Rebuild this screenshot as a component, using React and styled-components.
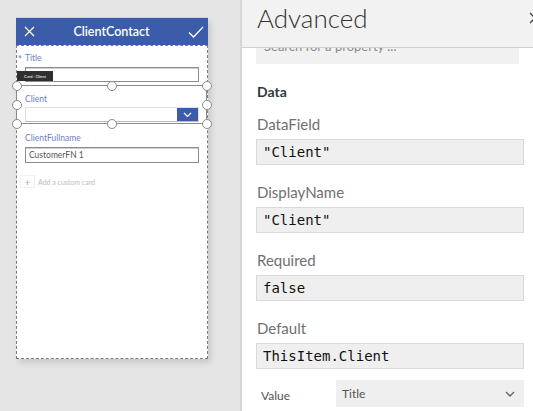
import styled, { createGlobalStyle } from "styled-components";

const GlobalStyle = createGlobalStyle`
  html, body {
    margin: 0;
    padding: 0;
    background: #e5e5e5;
    font-family: Lato, "Open Sans", sans-serif;
  }
`;

const Page = styled.div`
  display: flex;
  width: 533px;
  height: 411px;
  overflow: hidden;
  background: #e5e5e5;
`;

const Canvas = styled.div`
  width: 240px;
  flex-shrink: 0;
  padding: 17px 0 0 16px;
  box-sizing: border-box;
`;

const Phone = styled.div`
  width: 192px;
  height: 341px;
  background: #fff;
  border-top: 1px solid #c9d1e6;
  box-shadow: 3px 4px 6px rgba(0, 0, 0, 0.12);
  display: flex;
  flex-direction: column;
`;

const AppBar = styled.div`
  height: 27px;
  background: #3b5ca8;
  display: flex;
  align-items: center;
  justify-content: space-between;
  padding: 0 4px 0 8px;
  color: #fff;
  font-size: 12.5px;
  font-weight: 600;
`;

const Form = styled.div`
  flex: 1;
  border: 1px dashed #7a7a7a;
  display: flex;
  flex-direction: column;
`;

const Card = styled.div`
  position: relative;
  padding: ${(p) => p.pad || "7px 8px 4px 8px"};
  display: flex;
  flex-direction: column;
`;

const FieldLabel = styled.div`
  position: relative;
  font-size: 8.5px;
  line-height: 10px;
  color: #6f80c6;
  margin-bottom: ${(p) => p.gap || "4px"};
`;

const Star = styled.span`
  position: absolute;
  left: -7px;
  top: 1px;
  font-size: 9px;
  font-weight: 700;
`;

const Input = styled.div`
  height: ${(p) => p.h || "15px"};
  box-sizing: border-box;
  border: 1px solid #8c8c8c;
  box-shadow: inset 0 1px 0 #d0d0d0;
  font-size: 8.5px;
  color: #555;
  padding-left: 3px;
  display: flex;
  align-items: center;
  justify-content: space-between;
`;

const SelectBox = styled(Input)`
  border-color: #e0e0e0;
  border-bottom-color: #b8b8b8;
  box-shadow: none;
  padding: 0;
`;

const ChevronBox = styled.div`
  width: 21px;
  height: 13px;
  background: #3b5ca8;
  display: flex;
  align-items: center;
  justify-content: center;
`;

const Frame = styled.div`
  position: absolute;
  left: -1px;
  right: 0;
  top: -1px;
  bottom: 0;
  border: 1.5px solid #8a8a8a;
  border-left-width: 1px;
  pointer-events: none;
`;

const Handle = styled.div`
  position: absolute;
  width: 10px;
  height: 10px;
  border-radius: 50%;
  background: #fff;
  border: 1px solid #8a8a8a;
  box-sizing: border-box;
  transform: translate(-50%, -50%);
`;

const Tip = styled.div`
  position: absolute;
  left: 0;
  top: 25px;
  width: 36px;
  height: 10px;
  background: #2f2f2f;
  color: #ddd;
  font-size: 4px;
  font-weight: 700;
  display: flex;
  align-items: center;
  justify-content: center;
  z-index: 2;
`;

const AddRow = styled.div`
  display: flex;
  align-items: center;
  gap: 3px;
  margin: 12px 0 0 3px;
  font-size: 7px;
  color: #bdbdbd;
`;

const PlusBox = styled.div`
  width: 13px;
  height: 11px;
  border: 1px solid #f0f0f0;
  display: flex;
  align-items: center;
  justify-content: center;
  font-size: 10px;
  color: #aaa;
`;

const Panel = styled.div`
  flex: 1;
  background: #fff;
  border-left: 2px solid #d6d6d6;
  display: flex;
  flex-direction: column;
  overflow: hidden;
`;

const Header = styled.div`
  height: 48px;
  flex-shrink: 0;
  background: #f2f2f2;
  border-bottom: 1px solid #cfcfcf;
  display: flex;
  align-items: center;
  justify-content: space-between;
  padding: 0 0 0 15px;
  width: calc(100% + 8px);
  box-sizing: border-box;
  position: relative;
  z-index: 1;
`;

const Title = styled.div`
  font-size: 26px;
  font-weight: 300;
  color: #333;
  margin-top: -12px;
`;

const Body = styled.div`
  padding: 0 9px 0 14px;
  display: flex;
  flex-direction: column;
`;

const Search = styled.div`
  height: 26px;
  margin: -10px 5px 0 0;
  background: #f1f1f1;
  color: #8a8a8a;
  font-size: 13px;
  line-height: 16px;
  padding-left: 8px;
`;

const Section = styled.div`
  font-size: 14px;
  font-weight: 700;
  color: #2d3a40;
  line-height: 20px;
  margin: 18px 0 12px 1px;
`;

const Group = styled.div`
  display: flex;
  flex-direction: column;
  margin-bottom: 17px;
`;

const PropLabel = styled.div`
  font-size: 15px;
  line-height: 20px;
  color: #707070;
  margin: 0 0 5px 1px;
`;

const Code = styled.div`
  height: 26px;
  box-sizing: border-box;
  background: #efefef;
  border: 1px solid #d9d9d9;
  font-family: "DejaVu Sans Mono", "Liberation Mono", monospace;
  font-size: 14px;
  color: #111;
  padding-left: 6px;
  display: flex;
  align-items: center;
`;

const ValueRow = styled.div`
  display: flex;
  align-items: center;
  margin-top: -6px;
  height: 27px;
`;

const ValueLabel = styled.div`
  width: 75px;
  padding-left: 5px;
  font-size: 12px;
  color: #555;
  margin-top: 3px;
`;

const ValueSelect = styled.div`
  flex: 1;
  height: 27px;
  background: #efefef;
  display: flex;
  align-items: center;
  justify-content: space-between;
  padding: 0 9px 0 6px;
  font-size: 12px;
  color: #555;
`;

const Chevron = ({ color = "#fff", size = 9 }) => (
  <svg width={size} height={size * 0.6} viewBox="0 0 10 6">
    <path d="M1 1l4 4 4-4" fill="none" stroke={color} strokeWidth="1.4" />
  </svg>
);

export default function App() {
  const handles = [
    [0, 0], [50, 0], [100, 0],
    [0, 50], [100, 50],
    [0, 100], [50, 100], [100, 100],
  ];
  return (
    <Page>
      <GlobalStyle />
      <Canvas>
        <Phone>
          <AppBar>
            <svg width="11" height="11" viewBox="0 0 11 11">
              <path d="M1 1l9 9M10 1l-9 9" stroke="#fff" strokeWidth="1.2" />
            </svg>
            <span>ClientContact</span>
            <svg width="16" height="12" viewBox="0 0 16 12">
              <path d="M1 6.5l4.5 4.5L15 1" fill="none" stroke="#fff" strokeWidth="1.3" />
            </svg>
          </AppBar>
          <Form>
            <Card>
              <FieldLabel>
                <Star>*</Star>Title
              </FieldLabel>
              <Input />
              <Tip>Card : Client</Tip>
            </Card>
            <Card pad="8px 8px 2px 8px">
              <FieldLabel gap="3px">Client</FieldLabel>
              <SelectBox>
                <span />
                <ChevronBox>
                  <Chevron />
                </ChevronBox>
              </SelectBox>
              <Frame />
              {handles.map(([x, y]) => (
                <Handle key={`${x}-${y}`} style={{ left: `${x}%`, top: `${y}%` }} />
              ))}
            </Card>
            <Card pad="9px 8px 0 8px">
              <FieldLabel>ClientFullname</FieldLabel>
              <Input h="16px">CustomerFN 1</Input>
            </Card>
            <AddRow>
              <PlusBox>+</PlusBox>
              Add a custom card
            </AddRow>
          </Form>
        </Phone>
      </Canvas>
      <Panel>
        <Header>
          <Title>Advanced</Title>
          <svg width="12" height="12" viewBox="0 0 12 12" style={{ marginTop: -12 }}>
            <path d="M1 1l10 10M11 1L1 11" stroke="#444" strokeWidth="1.3" />
          </svg>
        </Header>
        <Body>
          <Search>Search for a property ...</Search>
          <Section>Data</Section>
          <Group>
            <PropLabel>DataField</PropLabel>
            <Code>"Client"</Code>
          </Group>
          <Group>
            <PropLabel>DisplayName</PropLabel>
            <Code>"Client"</Code>
          </Group>
          <Group>
            <PropLabel>Required</PropLabel>
            <Code>false</Code>
          </Group>
          <Group>
            <PropLabel>Default</PropLabel>
            <Code>ThisItem.Client</Code>
          </Group>
          <ValueRow>
            <ValueLabel>Value</ValueLabel>
            <ValueSelect>
              Title
              <Chevron color="#666" size={10} />
            </ValueSelect>
          </ValueRow>
        </Body>
      </Panel>
    </Page>
  );
}
